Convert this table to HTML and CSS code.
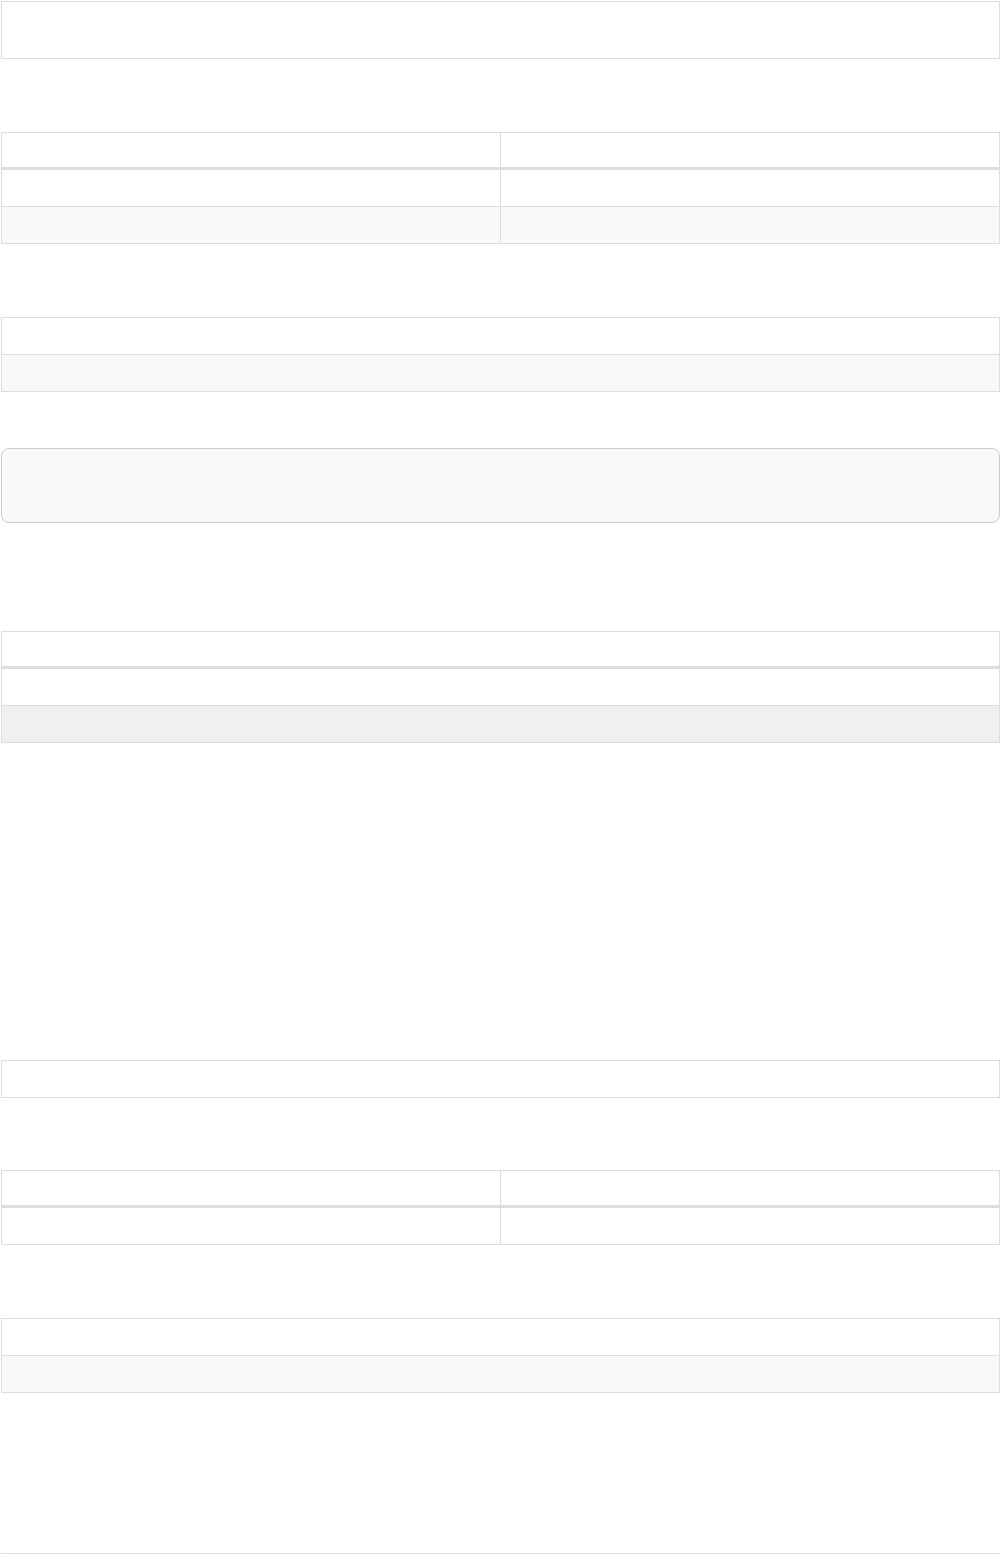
FILE: index.html
```html
<!DOCTYPE html>
<html lang="en">
<head>
    <meta charset="UTF-8">
    <meta name="viewport" content="width=device-width, initial-scale=1.0">
    <title>Tables</title>
    <link rel="stylesheet" href="styles.css">
</head>
<body>
    <div class="page">
        <div class="panel"></div>

        <table class="grid gap-73">
            <thead>
                <tr><th></th><th></th></tr>
            </thead>
            <tbody>
                <tr><td></td><td></td></tr>
                <tr><td></td><td></td></tr>
            </tbody>
        </table>

        <table class="grid gap-73">
            <tbody>
                <tr><td></td></tr>
                <tr><td></td></tr>
            </tbody>
        </table>

        <div class="code-box gap-56"></div>

        <table class="grid gap-108">
            <thead>
                <tr><th></th></tr>
            </thead>
            <tbody>
                <tr><td></td></tr>
                <tr class="active"><td></td></tr>
            </tbody>
        </table>

        <table class="grid gap-317">
            <tbody>
                <tr><td></td></tr>
            </tbody>
        </table>

        <table class="grid gap-72">
            <thead>
                <tr><th></th><th></th></tr>
            </thead>
            <tbody>
                <tr><td></td><td></td></tr>
            </tbody>
        </table>

        <table class="grid gap-73">
            <tbody>
                <tr><td></td></tr>
                <tr><td></td></tr>
            </tbody>
        </table>

        <hr class="rule gap-160">
    </div>
</body>
</html>
```

FILE: styles.css
```css
body {
    font-family: "Liberation Sans", Arial, sans-serif;
    margin: 0;
    padding: 1px 0 0 1px;
    background-color: #fff;
    color: #333;
}
.page {
    display: flex;
    flex-direction: column;
}
.panel {
    height: 58px;
    box-sizing: border-box;
    border: 1px solid #ddd;
    background-color: #fff;
}
.grid {
    width: 100%;
    border-collapse: collapse;
    table-layout: fixed;
}
.grid th,
.grid td {
    border: 1px solid #ddd;
    padding: 8px;
    height: 20px;
    text-align: left;
}
.grid th {
    height: 18px;
    border-bottom: 3px solid #ddd;
}
.grid tbody tr:nth-child(even) {
    background-color: #f9f9f9;
}
.grid tbody tr.active {
    background-color: #f0f0f0;
}
.code-box {
    height: 75px;
    box-sizing: border-box;
    border: 1px solid #ccc;
    border-radius: 8px;
    background-color: #f9f9f9;
}
.rule {
    width: 100%;
    margin-bottom: 0;
    border: none;
    border-top: 1px solid #ddd;
}
.gap-56 { margin-top: 56px; }
.gap-72 { margin-top: 72px; }
.gap-73 { margin-top: 73px; }
.gap-108 { margin-top: 108px; }
.gap-160 { margin-top: 160px; }
.gap-317 { margin-top: 317px; }
```
